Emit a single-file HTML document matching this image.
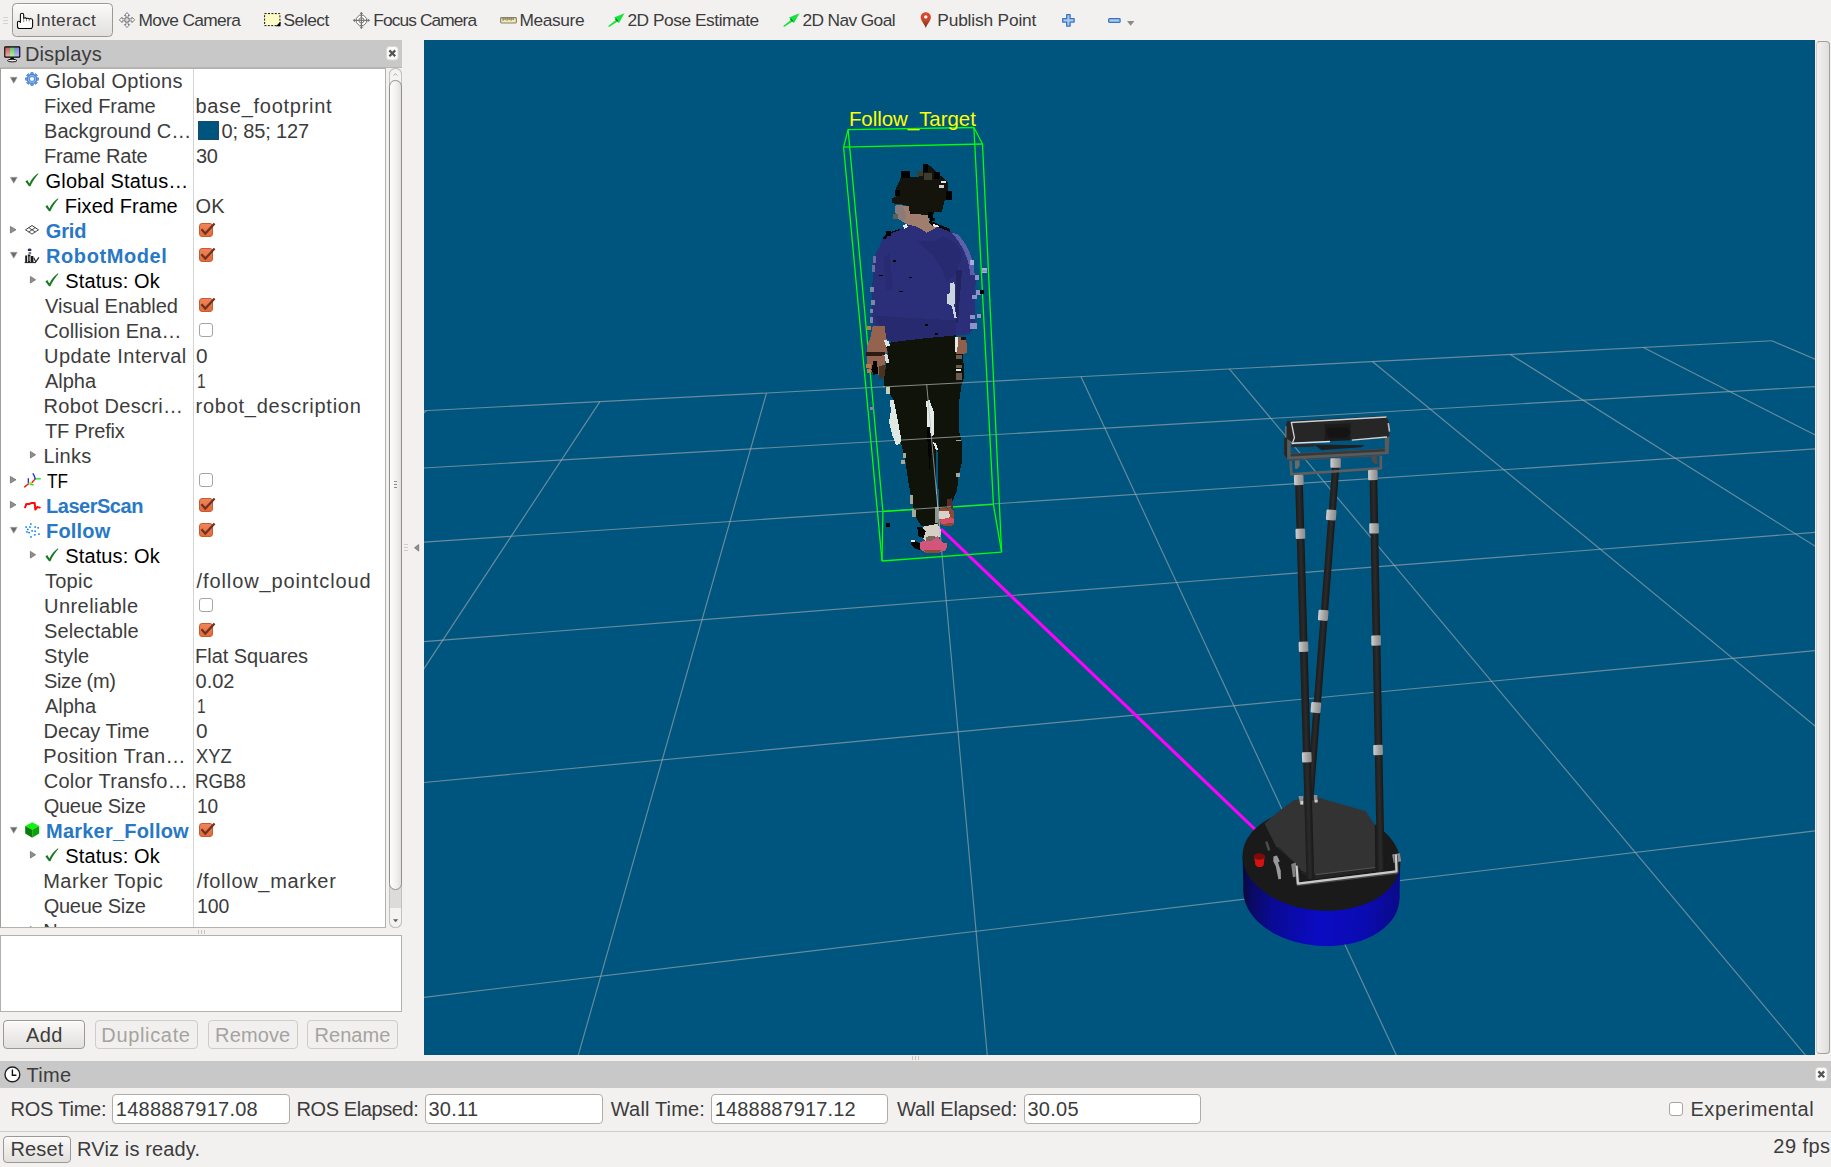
<!DOCTYPE html><html><head><meta charset="utf-8"><title>RViz</title><style>
html,body{margin:0;padding:0}
body{width:1831px;height:1167px;position:relative;overflow:hidden;background:#f2f1f0;
font-family:"Liberation Sans",sans-serif;font-size:20px;color:#3c3c3c}
.t{position:absolute;line-height:1;white-space:pre}
.a{position:absolute}
#tree{position:absolute;left:0;top:68px;width:386px;height:859.5px;box-sizing:border-box;background:#fff;
border:1px solid #b4b0ab;border-left:1px solid #a29e9a;overflow:hidden}
#tree .in{position:absolute;left:-1px;top:-1px;width:387px;height:900px}
.bar{position:absolute;background:#c8c8c8}
.btn{position:absolute;box-sizing:border-box;border:1px solid #b5b1ac;border-radius:4px;
background:linear-gradient(#f8f7f6,#e9e7e5)}
.btn.on{border-color:#9c9893;background:linear-gradient(#fbfaf9,#e2e0dd);box-shadow:0 1px 0 #fff inset}
.fld{position:absolute;box-sizing:border-box;border:1px solid #b0aca7;border-radius:4px;background:#fff}
.cb{position:absolute;width:14px;height:14px;box-sizing:border-box;border-radius:3px}
.cb.off{border:1px solid #aaa49e;background:#fff}
.cb.on{border:1px solid #c95a2e;background:linear-gradient(#f0845a,#e46a3c)}
svg{position:absolute;overflow:visible}
</style></head><body><div class="a" style="left:3px;top:17px;width:5px;height:1px;background:#d4d1ce;box-shadow:0 3px 0 #d4d1ce,0 6px 0 #d4d1ce"></div><div class="btn on" style="left:12.2px;top:3px;width:100.8px;height:33.8px;border-radius:4.5px"></div><svg class="a" style="left:17px;top:13px" width="17" height="17" viewBox="0 0 17 17" ><path d="M3.4 9.4V1.9a1.65 1.65 0 0 1 3.3 0V5.4c.9-.9 2.3-.7 2.8.3.8-.8 2.2-.6 2.7.4.9-.8 3.4-.5 3.4 1.2V13c0 1.5-1.2 2.5-1.2 2.5H2.6C1.5 15.5.5 14.3.5 13.2V9.3c0-1.200 1.600-1.700 2.900.100Z" fill="#fff" stroke="#0a0a0a" stroke-width="1.1" stroke-linejoin="round"/><path d="M6.7 5.4V9.200M9.500 5.900V8.200M12.200 6.300V8.300" stroke="#666" stroke-width="0.7" fill="none"/></svg><svg class="a" style="left:119px;top:12px" width="16" height="16" viewBox="0 0 16 16" ><g fill="#fff" stroke="#6e6e6e" stroke-width="0.9" stroke-linejoin="round"><path d="M8 0.6 10.6 3.6H9V6.9H13V5.2L15.6 7.9 13 10.6V8.9H9V12.6H10.6L8 15.5 5.4 12.6H7V8.9H3V10.6L0.4 7.9 3 5.2V6.9H7V3.6H5.4Z"/><circle cx="8" cy="7.9" r="2.3" fill="#ddd"/></g></svg><svg class="a" style="left:264px;top:13px" width="17" height="14" viewBox="0 0 17 14" ><rect x="0.6" y="0.6" width="15.3" height="12" fill="#fffcc4" stroke="#111" stroke-width="1" stroke-dasharray="2 1.4"/><path d="M16.5 8.6V13.2H11.9Z" fill="#000"/></svg><svg class="a" style="left:353px;top:12px" width="17" height="17" viewBox="0 0 17 17" ><g fill="none" stroke="#777" stroke-width="1"><circle cx="8.4" cy="8.4" r="5.3" fill="#fff"/><circle cx="8.4" cy="8.4" r="2.6"/><path d="M8.4 0.3V16.5M0.3 8.4H16.5" stroke-width="1.3"/><path d="M6.9 2.2 8.4 0.3 9.9 2.2M6.9 14.6 8.4 16.5 9.9 14.6M2.2 6.9 0.3 8.4 2.2 9.9M14.6 6.9 16.5 8.4 14.6 9.9" stroke-width="0.9"/></g></svg><svg class="a" style="left:499.5px;top:16.6px" width="17" height="7" viewBox="0 0 17 7" ><rect x="0.6" y="0.6" width="15.8" height="5.4" rx="0.9" fill="#f1e9b2" stroke="#85816f" stroke-width="1.1"/><path d="M3.1 1.1V3.6M5.1 1.1V3M7.1 1.1V3.6M9.1 1.1V3M11.1 1.1V3.6M13.1 1.1V3" stroke="#4a4738" stroke-width="0.9" fill="none"/></svg><svg class="a" style="left:607.8px;top:12.6px" width="17" height="14" viewBox="0 0 17 14" ><path d="M0.2 12.9 7.8 6.9 9.2 8.7 1.1 14Z" fill="#12e63a"/><path d="M16.5 0.3 6 4.5 10.9 10.3Z" fill="#12e63a"/><path d="M6.9 6 8.3 5.4 10.3 8 9.2 9Z" fill="#1f6e38"/></svg><svg class="a" style="left:782.8px;top:12.6px" width="17" height="14" viewBox="0 0 17 14" ><path d="M0.2 12.9 7.8 6.9 9.2 8.7 1.1 14Z" fill="#12e63a"/><path d="M16.5 0.3 6 4.5 10.9 10.3Z" fill="#12e63a"/><path d="M6.9 6 8.3 5.4 10.3 8 9.2 9Z" fill="#1f6e38"/></svg><svg class="a" style="left:920.1px;top:11.6px" width="12" height="17" viewBox="0 0 12 17" ><defs><linearGradient id="pg" x1="0" y1="0" x2="0" y2="1"><stop offset="0" stop-color="#e4492c"/><stop offset="0.5" stop-color="#c9472a"/><stop offset="1" stop-color="#5a3418"/></linearGradient></defs><path d="M5.8 0.3C2.9 0.3 0.7 2.5 0.7 5.3 0.7 8.6 4 11.5 5.8 16 7.6 11.5 10.9 8.6 10.9 5.3 10.9 2.5 8.7 0.3 5.8 0.3Z" fill="url(#pg)"/><circle cx="5.8" cy="4.9" r="1.7" fill="#fff"/></svg><svg class="a" style="left:1061.6px;top:13.6px" width="13" height="13" viewBox="0 0 13 13" ><path d="M4.7 0.7H8.1V4.7H12.1V8.1H8.1V12.1H4.7V8.1H0.7V4.7H4.7Z" fill="#a9c8f0" stroke="#3b73c1" stroke-width="1.3" stroke-linejoin="round"/></svg><svg class="a" style="left:1107.8px;top:17.6px" width="13" height="5" viewBox="0 0 13 5" ><rect x="0.7" y="0.7" width="11.4" height="3.6" rx="0.8" fill="#a9c8f0" stroke="#3b73c1" stroke-width="1.3"/></svg><svg class="a" style="left:1126.8px;top:21px" width="8" height="5" viewBox="0 0 8 5" ><path d="M0 0H7.4L3.7 4.8Z" fill="#8a8a8a"/></svg><div class="bar" style="left:0;top:40.2px;width:402px;height:27.3px;border-bottom:0.5px solid #b8b5b2"></div><div class="bar" style="left:0;top:1061px;width:1831px;height:26.8px"></div><svg class="a" style="left:3.8px;top:45.8px" width="17" height="17" viewBox="0 0 17 17" ><defs><linearGradient id="mr" x1="0" y1="0" x2="0" y2="1"><stop offset="0" stop-color="#c06060"/><stop offset="1" stop-color="#f4a8a8"/></linearGradient><linearGradient id="mg" x1="0" y1="0" x2="0" y2="1"><stop offset="0" stop-color="#68c468"/><stop offset="1" stop-color="#b0f0b0"/></linearGradient><linearGradient id="mb" x1="0" y1="0" x2="0" y2="1"><stop offset="0" stop-color="#8080d8"/><stop offset="1" stop-color="#b8b8ff"/></linearGradient></defs><rect x="0.2" y="0.3" width="16.1" height="11.4" rx="1.3" fill="#000"/><rect x="1.3" y="1.5" width="4.7" height="9" fill="url(#mr)"/><rect x="6" y="1.5" width="4.9" height="9" fill="url(#mg)"/><rect x="10.9" y="1.5" width="4.3" height="9" fill="url(#mb)"/><path d="M7 11.5H9.4L10.4 13.3H6Z" fill="#000"/><ellipse cx="8.2" cy="14.6" rx="4.7" ry="1.3" fill="#eee" stroke="#000" stroke-width="0.9"/></svg><svg class="a" style="left:385.8px;top:46px" width="13" height="15" viewBox="0 0 13 15" ><rect x="0.5" y="0.5" width="11.6" height="13.6" rx="3" fill="#fbfbfa" stroke="#d8d4d0" stroke-width="0.8"/><path d="M3.4 4.4 9.2 10.2M9.2 4.4 3.4 10.2" stroke="#555" stroke-width="2.3"/></svg><svg class="a" style="left:1814.8px;top:1067.4px" width="13" height="15" viewBox="0 0 13 15" ><rect x="0.5" y="0.5" width="11.6" height="13.6" rx="3" fill="#fbfbfa" stroke="#d8d4d0" stroke-width="0.8"/><path d="M3.4 4.4 9.2 10.2M9.2 4.4 3.4 10.2" stroke="#555" stroke-width="2.3"/></svg><svg class="a" style="left:3.6px;top:1066.4px" width="17" height="17" viewBox="0 0 17 17" ><circle cx="8.4" cy="8.4" r="7.4" fill="#fff" stroke="#222" stroke-width="1.4"/><path d="M8.4 3.6V9.2H12.4" fill="none" stroke="#111" stroke-width="1.4"/></svg><div class="a" style="left:389.3px;top:67.5px;width:12.6px;height:860px;box-sizing:border-box;border:1px solid #c4c0bb;border-radius:6.3px;background:#dddbd8"></div><div class="a" style="left:389.3px;top:67.5px;width:12.6px;height:19px;box-sizing:border-box;border:1px solid #c4c0bb;border-bottom:none;border-radius:6.3px 6.3px 0 0;background:#f4f3f2"></div><div class="a" style="left:389.3px;top:908px;width:12.6px;height:19.5px;box-sizing:border-box;border:1px solid #c4c0bb;border-top:none;border-radius:0 0 6.3px 6.3px;background:#f4f3f2"></div><div class="a" style="left:389.3px;top:80px;width:12.6px;height:810px;box-sizing:border-box;border:1px solid #948f8a;border-radius:6.3px;background:linear-gradient(90deg,#fdfdfd,#f2f1f0 55%,#e2e0de)"></div><svg class="a" style="left:393.2px;top:72.6px" width="5" height="3" viewBox="0 0 5 3" ><path d="M0.4 2.6 2.4 0.6 4.4 2.6" fill="none" stroke="#aaa6a2" stroke-width="0.9"/></svg><svg class="a" style="left:393px;top:918.6px" width="6" height="4" viewBox="0 0 6 4" ><path d="M0 0.3H5.2L2.6 3.3Z" fill="#5c5c5c"/></svg><div class="a" style="left:394px;top:481px;width:3px;height:1px;background:#8e8a86;box-shadow:0 3px 0 #8e8a86,0 6px 0 #8e8a86"></div><div class="a" style="left:403.5px;top:544px;width:4px;height:1px;background:#d0ccc8;box-shadow:0 3px 0 #d0ccc8,0 6px 0 #d0ccc8"></div><svg class="a" style="left:414px;top:543.6px" width="6" height="8" viewBox="0 0 6 8" ><path d="M4.7 0.5V7.1L0.5 3.8Z" fill="#8f8f8f" stroke="#6a6a6a" stroke-width="0.7"/></svg><svg class="a" style="left:1820.6px;top:543.6px" width="6" height="8" viewBox="0 0 6 8" ><path d="M4.7 0.5V7.1L0.5 3.8Z" fill="#8f8f8f" stroke="#6a6a6a" stroke-width="0.7"/></svg><div class="a" style="left:198px;top:929.5px;width:1px;height:4px;background:#c8c4c0;box-shadow:3px 0 0 #c8c4c0,6px 0 0 #c8c4c0"></div><div class="a" style="left:912px;top:1056px;width:1px;height:4px;background:#c8c4c0;box-shadow:3px 0 0 #c8c4c0,6px 0 0 #c8c4c0"></div><div class="a" style="left:1816.2px;top:41px;width:13.6px;height:1012.5px;box-sizing:border-box;border:1px solid #a39f9a;border-left-color:#d2cfcc;border-radius:4px;background:linear-gradient(90deg,#f3f2f1,#e0dedb)"></div><div class="a" style="left:0;top:934.5px;width:401.8px;height:77px;box-sizing:border-box;border:1px solid #b4b0ab;background:#fff"></div><div class="btn on" style="left:3.3px;top:1019.6px;width:82.2px;height:29.8px"></div><div class="btn" style="left:94.6px;top:1019.6px;width:103.6px;height:29.8px;border-color:#cfccc8;background:#f1f0ee"></div><div class="btn" style="left:207.5px;top:1019.6px;width:90.7px;height:29.8px;border-color:#cfccc8;background:#f1f0ee"></div><div class="btn" style="left:307.3px;top:1019.6px;width:91px;height:29.8px;border-color:#cfccc8;background:#f1f0ee"></div><div class="fld" style="left:112.3px;top:1094.3px;width:177.3px;height:30.2px"></div><div class="fld" style="left:425.3px;top:1094.3px;width:177.5px;height:30.2px"></div><div class="fld" style="left:711.4px;top:1094.3px;width:177.1px;height:30.2px"></div><div class="fld" style="left:1024.3px;top:1094.3px;width:177.1px;height:30.2px"></div><div class="cb off" style="left:1669px;top:1102px"></div><div class="a" style="left:0;top:1131.2px;width:1831px;height:1px;background:#d0cdca"></div><div class="btn on" style="left:3.3px;top:1135.8px;width:67.4px;height:27.6px"></div><div id="tree"><div class="in"><div class="a" style="left:193px;top:0;width:1px;height:900px;background:#d4d4d4"></div><svg class="a" style="left:9.8px;top:8.9px" width="8" height="7" viewBox="0 0 8 7" ><path d="M0.3 0.3H7.2L3.75 6.3Z" fill="#6a6a6a" stroke="#a4a4a4" stroke-width="0.6"/></svg><svg class="a" style="left:9.8px;top:108.9px" width="8" height="7" viewBox="0 0 8 7" ><path d="M0.3 0.3H7.2L3.75 6.3Z" fill="#6a6a6a" stroke="#a4a4a4" stroke-width="0.6"/></svg><svg class="a" style="left:9.8px;top:183.9px" width="8" height="7" viewBox="0 0 8 7" ><path d="M0.3 0.3H7.2L3.75 6.3Z" fill="#6a6a6a" stroke="#a4a4a4" stroke-width="0.6"/></svg><svg class="a" style="left:9.8px;top:458.9px" width="8" height="7" viewBox="0 0 8 7" ><path d="M0.3 0.3H7.2L3.75 6.3Z" fill="#6a6a6a" stroke="#a4a4a4" stroke-width="0.6"/></svg><svg class="a" style="left:9.8px;top:758.9px" width="8" height="7" viewBox="0 0 8 7" ><path d="M0.3 0.3H7.2L3.75 6.3Z" fill="#6a6a6a" stroke="#a4a4a4" stroke-width="0.6"/></svg><svg class="a" style="left:10px;top:158.4px" width="7" height="8" viewBox="0 0 7 8" ><path d="M0.4 0.4 6 3.75 0.4 7.1Z" fill="#8f8f8f" stroke="#666" stroke-width="0.7"/></svg><svg class="a" style="left:10px;top:408.4px" width="7" height="8" viewBox="0 0 7 8" ><path d="M0.4 0.4 6 3.75 0.4 7.1Z" fill="#8f8f8f" stroke="#666" stroke-width="0.7"/></svg><svg class="a" style="left:10px;top:433.4px" width="7" height="8" viewBox="0 0 7 8" ><path d="M0.4 0.4 6 3.75 0.4 7.1Z" fill="#8f8f8f" stroke="#666" stroke-width="0.7"/></svg><svg class="a" style="left:30.3px;top:208.4px" width="7" height="8" viewBox="0 0 7 8" ><path d="M0.4 0.4 5.6 3.75 0.4 7.1Z" fill="#8f8f8f" stroke="#666" stroke-width="0.7"/></svg><svg class="a" style="left:30.3px;top:383.4px" width="7" height="8" viewBox="0 0 7 8" ><path d="M0.4 0.4 5.6 3.75 0.4 7.1Z" fill="#8f8f8f" stroke="#666" stroke-width="0.7"/></svg><svg class="a" style="left:30.3px;top:483.4px" width="7" height="8" viewBox="0 0 7 8" ><path d="M0.4 0.4 5.6 3.75 0.4 7.1Z" fill="#8f8f8f" stroke="#666" stroke-width="0.7"/></svg><svg class="a" style="left:30.3px;top:783.4px" width="7" height="8" viewBox="0 0 7 8" ><path d="M0.4 0.4 5.6 3.75 0.4 7.1Z" fill="#8f8f8f" stroke="#666" stroke-width="0.7"/></svg><svg class="a" style="left:30.3px;top:858.4px" width="7" height="8" viewBox="0 0 7 8" ><path d="M0.4 0.4 5.6 3.75 0.4 7.1Z" fill="#8f8f8f" stroke="#666" stroke-width="0.7"/></svg><svg class="a" style="left:25px;top:105px" width="14" height="14" viewBox="0 0 14 14" ><path d="M0.4 8.4 2.3 7 4.4 10.4C6.6 6 9.6 2.4 13 0.2L13.4 0.9C10.6 3.8 7.4 8.4 5.4 13.2H4Z" fill="#1a7a1f"/></svg><svg class="a" style="left:45px;top:130px" width="14" height="14" viewBox="0 0 14 14" ><path d="M0.4 8.4 2.3 7 4.4 10.4C6.6 6 9.6 2.4 13 0.2L13.4 0.9C10.6 3.8 7.4 8.4 5.4 13.2H4Z" fill="#1a7a1f"/></svg><svg class="a" style="left:45px;top:205px" width="14" height="14" viewBox="0 0 14 14" ><path d="M0.4 8.4 2.3 7 4.4 10.4C6.6 6 9.6 2.4 13 0.2L13.4 0.9C10.6 3.8 7.4 8.4 5.4 13.2H4Z" fill="#1a7a1f"/></svg><svg class="a" style="left:45px;top:480px" width="14" height="14" viewBox="0 0 14 14" ><path d="M0.4 8.4 2.3 7 4.4 10.4C6.6 6 9.6 2.4 13 0.2L13.4 0.9C10.6 3.8 7.4 8.4 5.4 13.2H4Z" fill="#1a7a1f"/></svg><svg class="a" style="left:45px;top:780px" width="14" height="14" viewBox="0 0 14 14" ><path d="M0.4 8.4 2.3 7 4.4 10.4C6.6 6 9.6 2.4 13 0.2L13.4 0.9C10.6 3.8 7.4 8.4 5.4 13.2H4Z" fill="#1a7a1f"/></svg><div class="cb on" style="left:199px;top:155px"></div><svg class="a" style="left:199px;top:154px" width="17" height="16" viewBox="0 0 17 16" ><path d="M2.4 7.3 6.3 11.6 15.6 1.6" fill="none" stroke="#6b3320" stroke-width="2.2" stroke-linejoin="miter"/></svg><div class="cb on" style="left:199px;top:180px"></div><svg class="a" style="left:199px;top:179px" width="17" height="16" viewBox="0 0 17 16" ><path d="M2.4 7.3 6.3 11.6 15.6 1.6" fill="none" stroke="#6b3320" stroke-width="2.2" stroke-linejoin="miter"/></svg><div class="cb on" style="left:199px;top:230px"></div><svg class="a" style="left:199px;top:229px" width="17" height="16" viewBox="0 0 17 16" ><path d="M2.4 7.3 6.3 11.6 15.6 1.6" fill="none" stroke="#6b3320" stroke-width="2.2" stroke-linejoin="miter"/></svg><div class="cb on" style="left:199px;top:430px"></div><svg class="a" style="left:199px;top:429px" width="17" height="16" viewBox="0 0 17 16" ><path d="M2.4 7.3 6.3 11.6 15.6 1.6" fill="none" stroke="#6b3320" stroke-width="2.2" stroke-linejoin="miter"/></svg><div class="cb on" style="left:199px;top:455px"></div><svg class="a" style="left:199px;top:454px" width="17" height="16" viewBox="0 0 17 16" ><path d="M2.4 7.3 6.3 11.6 15.6 1.6" fill="none" stroke="#6b3320" stroke-width="2.2" stroke-linejoin="miter"/></svg><div class="cb on" style="left:199px;top:555px"></div><svg class="a" style="left:199px;top:554px" width="17" height="16" viewBox="0 0 17 16" ><path d="M2.4 7.3 6.3 11.6 15.6 1.6" fill="none" stroke="#6b3320" stroke-width="2.2" stroke-linejoin="miter"/></svg><div class="cb on" style="left:199px;top:755px"></div><svg class="a" style="left:199px;top:754px" width="17" height="16" viewBox="0 0 17 16" ><path d="M2.4 7.3 6.3 11.6 15.6 1.6" fill="none" stroke="#6b3320" stroke-width="2.2" stroke-linejoin="miter"/></svg><div class="cb off" style="left:199px;top:255px"></div><div class="cb off" style="left:199px;top:405px"></div><div class="cb off" style="left:199px;top:530px"></div><svg class="a" style="left:24.6px;top:4.4px" width="14" height="14" viewBox="0 0 14 14" ><g transform="translate(7,7)"><g fill="#6f9ee0" stroke="#3b78cc" stroke-width="0.7"><rect x="-1.3" y="-6.5" width="2.6" height="2.6" rx="0.4" transform="rotate(0)"/><rect x="-1.3" y="-6.5" width="2.6" height="2.6" rx="0.4" transform="rotate(45)"/><rect x="-1.3" y="-6.5" width="2.6" height="2.6" rx="0.4" transform="rotate(90)"/><rect x="-1.3" y="-6.5" width="2.6" height="2.6" rx="0.4" transform="rotate(135)"/><rect x="-1.3" y="-6.5" width="2.6" height="2.6" rx="0.4" transform="rotate(180)"/><rect x="-1.3" y="-6.5" width="2.6" height="2.6" rx="0.4" transform="rotate(225)"/><rect x="-1.3" y="-6.5" width="2.6" height="2.6" rx="0.4" transform="rotate(270)"/><rect x="-1.3" y="-6.5" width="2.6" height="2.6" rx="0.4" transform="rotate(315)"/></g><circle r="3.55" fill="none" stroke="#3b78cc" stroke-width="2.9"/><circle r="3.55" fill="none" stroke="#8db3ea" stroke-width="1.5"/><circle r="1.6" fill="#eef4fc"/></g></svg><div class="a" style="left:198.8px;top:53.9px;width:19px;height:17.6px;background:rgb(0,85,127);outline:0.5px solid #1a4a66"></div><svg class="a" style="left:25.2px;top:156.6px" width="14" height="10" viewBox="0 0 14 10" ><g fill="none" stroke="#333" stroke-width="0.9"><path d="M7 0.5 13.5 4.8 7 9.1 0.5 4.8Z"/><path d="M3.75 2.65 10.25 6.95M10.25 2.65 3.75 6.95"/></g></svg><svg class="a" style="left:24.4px;top:179.6px" width="16" height="16" viewBox="0 0 16 16" ><ellipse cx="5.6" cy="1.6" rx="1.9" ry="1.1" fill="#24389a"/><path d="M3.9 2.4H7.3" stroke="#111" stroke-width="0.9"/><path d="M4.6 4.4H7.2V5.6H4.6Z" fill="#222"/><path d="M1.2 7.4H3V14.6H1.2ZM3.8 6.6H6.4V14.6H3.8ZM7 8H9.4V14.6H7Z" fill="#1b1b1b"/><path d="M4.6 8.2H5.7V13H4.6Z" fill="#9aa"/><path d="M9.8 9.8 11.8 13.9 14.9 9.4" fill="none" stroke="#222" stroke-width="1.1"/><path d="M0.6 14.6H12" stroke="#222" stroke-width="1"/></svg><svg class="a" style="left:23.5px;top:404.5px" width="17" height="15" viewBox="0 0 17 15" ><g fill="none" stroke-width="1.4" stroke-linecap="round"><path d="M0.7 13.9 L4.8 10.5" stroke="#ff1010"/><path d="M4.8 10.5 L9.1 11.9" stroke="#10e010"/><path d="M4.3 5.7 L4.4 10.1" stroke="#2030ff"/><path d="M8.0 9.5 L11.2 5.9" stroke="#ff1010"/><path d="M11.2 5.9 L16.3 5.9" stroke="#10e010"/><path d="M9.1 0.8 L10.1 2.5 L11.1 5.5" stroke="#2030ff"/><path d="M5.1 10.3 L7.1 9.1" stroke="#f0e020"/></g></svg><svg class="a" style="left:23.5px;top:432px" width="17" height="12" viewBox="0 0 17 12" ><path d="M1.1 7.3 L2.4 3.9 L5.6 3.9 L7.5 2.9 L10.7 2.9 L11.3 9.6 L13.4 7.0 L15.8 7.6" fill="none" stroke="#ff0a0a" stroke-width="2" stroke-linejoin="round" stroke-linecap="round"/></svg><svg class="a" style="left:24px;top:454px" width="17" height="17" viewBox="0 0 17 17" ><g fill="#0a84ff"><rect x="6.0" y="1.3" width="1.7" height="1.5"/><rect x="1.3" y="4.3" width="1.7" height="1.5"/><rect x="5.1" y="4.3" width="1.7" height="1.5"/><rect x="10.3" y="4.3" width="1.7" height="1.5"/><rect x="13.3" y="5.1" width="1.7" height="1.5"/><rect x="3.0" y="6.7" width="1.7" height="1.5"/><rect x="7.3" y="8.2" width="1.7" height="1.5"/><rect x="10.3" y="8.5" width="1.7" height="1.5"/><rect x="2.1" y="9.2" width="1.7" height="1.5"/><rect x="4.3" y="9.9" width="1.7" height="1.5"/><rect x="14.1" y="11.4" width="1.7" height="1.5"/><rect x="9.9" y="12.1" width="1.7" height="1.5"/><rect x="6.2" y="14.2" width="1.7" height="1.5"/></g></svg><svg class="a" style="left:24.8px;top:754px" width="15" height="16" viewBox="0 0 15 16" ><path d="M7.2 0.2 14.2 3.9 7.2 7.8 0.2 3.9Z" fill="#0cf50c"/><path d="M0.2 3.9 7.2 7.8V15.8L0.2 11.6Z" fill="#0a7d0a"/><path d="M14.2 3.9 7.2 7.8V15.8L14.2 11.6Z" fill="#0aa40a"/></svg><span class="t" id="t10" style="left:45.60px;top:2.77px;letter-spacing:0.354px;">Global Options</span><span class="t" id="t11" style="left:44.00px;top:27.77px;letter-spacing:-0.050px;">Fixed Frame</span><span class="t" id="t12" style="left:195.40px;top:27.77px;letter-spacing:0.731px;">base_footprint</span><span class="t" id="t13" style="left:44.00px;top:52.77px;letter-spacing:0.042px;">Background C…</span><span class="t" id="t14" style="left:221.50px;top:52.77px;letter-spacing:-0.144px;">0; 85; 127</span><span class="t" id="t15" style="left:44.00px;top:77.77px;letter-spacing:-0.211px;">Frame Rate</span><span class="t" id="t16" style="left:196.00px;top:77.77px;letter-spacing:-0.300px;">30</span><span class="t" id="t17" style="left:45.60px;top:102.77px;color:#000;letter-spacing:0.208px;">Global Status…</span><span class="t" id="t18" style="left:64.80px;top:127.77px;color:#000;letter-spacing:0.070px;">Fixed Frame</span><span class="t" id="t19" style="left:195.60px;top:127.77px;">OK</span><span class="t" id="t20" style="left:45.80px;top:152.77px;font-weight:bold;color:rgb(40,120,197);letter-spacing:-0.167px;">Grid</span><span class="t" id="t21" style="left:46.00px;top:177.77px;font-weight:bold;color:rgb(40,120,197);letter-spacing:0.589px;">RobotModel</span><span class="t" id="t22" style="left:65.30px;top:202.77px;color:#000;letter-spacing:0.122px;">Status: Ok</span><span class="t" id="t23" style="left:45.00px;top:227.77px;letter-spacing:-0.008px;">Visual Enabled</span><span class="t" id="t24" style="left:44.00px;top:252.77px;letter-spacing:0.054px;">Collision Ena…</span><span class="t" id="t25" style="left:44.00px;top:277.77px;letter-spacing:0.471px;">Update Interval</span><span class="t" id="t26" style="left:195.56px;top:277.77px;transform-origin:0 0;transform:scaleX(1.0400);">0</span><span class="t" id="t27" style="left:45.00px;top:302.77px;letter-spacing:-0.025px;">Alpha</span><span class="t" id="t28" style="left:197.22px;top:302.77px;transform-origin:0 0;transform:scaleX(0.7778);">1</span><span class="t" id="t29" style="left:43.50px;top:327.77px;letter-spacing:0.333px;">Robot Descri…</span><span class="t" id="t30" style="left:195.60px;top:327.77px;letter-spacing:0.737px;">robot_description</span><span class="t" id="t31" style="left:45.00px;top:352.77px;letter-spacing:-0.162px;">TF Prefix</span><span class="t" id="t32" style="left:43.50px;top:377.77px;letter-spacing:0.250px;">Links</span><span class="t" id="t33" style="left:46.80px;top:402.77px;transform-origin:0 0;transform:scaleX(0.8583);color:#000;">TF</span><span class="t" id="t34" style="left:46.00px;top:427.77px;font-weight:bold;color:rgb(40,120,197);letter-spacing:-0.475px;">LaserScan</span><span class="t" id="t35" style="left:46.00px;top:452.77px;font-weight:bold;color:rgb(40,120,197);letter-spacing:0.200px;">Follow</span><span class="t" id="t36" style="left:65.30px;top:477.77px;color:#000;letter-spacing:0.122px;">Status: Ok</span><span class="t" id="t37" style="left:45.00px;top:502.77px;letter-spacing:0.250px;">Topic</span><span class="t" id="t38" style="left:196.60px;top:502.77px;letter-spacing:0.888px;">/follow_pointcloud</span><span class="t" id="t39" style="left:44.00px;top:527.77px;letter-spacing:0.444px;">Unreliable</span><span class="t" id="t40" style="left:44.00px;top:552.77px;letter-spacing:0.144px;">Selectable</span><span class="t" id="t41" style="left:44.00px;top:577.77px;letter-spacing:0.175px;">Style</span><span class="t" id="t42" style="left:195.10px;top:577.77px;letter-spacing:-0.036px;">Flat Squares</span><span class="t" id="t43" style="left:44.00px;top:602.77px;letter-spacing:-0.371px;">Size (m)</span><span class="t" id="t44" style="left:195.60px;top:602.77px;letter-spacing:-0.067px;">0.02</span><span class="t" id="t45" style="left:45.00px;top:627.77px;letter-spacing:-0.025px;">Alpha</span><span class="t" id="t46" style="left:197.22px;top:627.77px;transform-origin:0 0;transform:scaleX(0.7778);">1</span><span class="t" id="t47" style="left:43.50px;top:652.77px;letter-spacing:0.033px;">Decay Time</span><span class="t" id="t48" style="left:195.56px;top:652.77px;transform-origin:0 0;transform:scaleX(1.0400);">0</span><span class="t" id="t49" style="left:43.20px;top:677.77px;letter-spacing:0.431px;">Position Tran…</span><span class="t" id="t50" style="left:195.88px;top:677.77px;transform-origin:0 0;transform:scaleX(0.9158);">XYZ</span><span class="t" id="t51" style="left:43.70px;top:702.77px;letter-spacing:0.300px;">Color Transfo…</span><span class="t" id="t52" style="left:195.40px;top:702.77px;transform-origin:0 0;transform:scaleX(0.9327);">RGB8</span><span class="t" id="t53" style="left:43.70px;top:727.77px;letter-spacing:-0.267px;">Queue Size</span><span class="t" id="t54" style="left:196.95px;top:727.77px;transform-origin:0 0;transform:scaleX(0.9524);">10</span><span class="t" id="t55" style="left:46.10px;top:752.77px;font-weight:bold;color:rgb(40,120,197);letter-spacing:0.208px;">Marker_Follow</span><span class="t" id="t56" style="left:65.30px;top:777.77px;color:#000;letter-spacing:0.122px;">Status: Ok</span><span class="t" id="t57" style="left:43.20px;top:802.77px;letter-spacing:0.500px;">Marker Topic</span><span class="t" id="t58" style="left:196.80px;top:802.77px;letter-spacing:0.692px;">/follow_marker</span><span class="t" id="t59" style="left:43.70px;top:827.77px;letter-spacing:-0.267px;">Queue Size</span><span class="t" id="t60" style="left:196.93px;top:827.77px;transform-origin:0 0;transform:scaleX(0.9688);">100</span><span class="t" id="t61" style="left:43.20px;top:852.77px;letter-spacing:-0.744px;">Namespaces</span></div></div><div class="a" id="vp" style="left:424px;top:40px;width:1391px;height:1015px;background:rgb(0,85,127);overflow:hidden"><svg style="left:0;top:0" width="1391" height="1015" viewBox="424 40 1391 1015"><g stroke="#a9acb0" stroke-opacity="0.62" stroke-width="1.15" fill="none"><line x1="245.8" y1="420.0" x2="-2451.2" y2="2336.2"/><line x1="426.4" y1="410.6" x2="-1323.0" y2="2104.0"/><line x1="599.9" y1="401.6" x2="-395.8" y2="1913.2"/><line x1="766.5" y1="393.0" x2="379.8" y2="1753.5"/><line x1="926.7" y1="384.6" x2="1038.1" y2="1618.0"/><line x1="1080.9" y1="376.6" x2="1603.8" y2="1501.6"/><line x1="1229.3" y1="368.9" x2="2095.3" y2="1400.4"/><line x1="1372.4" y1="361.5" x2="2526.1" y2="1311.7"/><line x1="1510.3" y1="354.4" x2="2907.0" y2="1233.3"/><line x1="1643.4" y1="347.5" x2="3246.1" y2="1163.5"/><line x1="1771.9" y1="340.8" x2="3549.9" y2="1101.0"/><line x1="245.8" y1="420.0" x2="1771.9" y2="340.8"/><line x1="156.1" y1="483.7" x2="1871.4" y2="383.3"/><line x1="37.5" y1="568.0" x2="1996.1" y2="436.7"/><line x1="-127.1" y1="684.9" x2="2157.1" y2="505.5"/><line x1="-370.5" y1="857.8" x2="2372.9" y2="597.7"/><line x1="-767.2" y1="1139.8" x2="2677.1" y2="727.8"/><line x1="-1529.2" y1="1681.1" x2="3138.2" y2="925.0"/></g><line x1="941" y1="529" x2="1262" y2="836" stroke="#ff00ff" stroke-width="3.1"/><defs><linearGradient id="blu" gradientUnits="userSpaceOnUse" x1="1242" y1="0" x2="1402" y2="0"><stop offset="0" stop-color="#090938"/><stop offset="0.06" stop-color="#0a0a62"/><stop offset="0.2" stop-color="#0a0a94"/><stop offset="0.5" stop-color="#0b0bc4"/><stop offset="0.78" stop-color="#0b0bb2"/><stop offset="1" stop-color="#0a0a86"/></linearGradient><linearGradient id="pol" x1="0" y1="0" x2="1" y2="0"><stop offset="0" stop-color="#1c1c1c"/><stop offset="0.5" stop-color="#2b2b2b"/><stop offset="1" stop-color="#171717"/></linearGradient><linearGradient id="jnt" x1="0" y1="0" x2="1" y2="0"><stop offset="0" stop-color="#d0d0d0"/><stop offset="0.5" stop-color="#a8a8a8"/><stop offset="1" stop-color="#8a8a8a"/></linearGradient></defs><g fill="url(#blu)"><ellipse cx="1321.4" cy="894.8" rx="78.2" ry="51.1" transform="rotate(4.6 1321.4 894.8)"/><polygon points="1242.6,855.8 1400.2,863.2 1399.5,898.5 1243.4,891.1"/></g><ellipse cx="1321.4" cy="859.5" rx="79.0" ry="51.1" fill="#1a1a1a" transform="rotate(4.6 1321.4 859.5)"/><polygon points="1264.5,823.4 1281.8,808.9 1294.0,800.0 1317.4,797.2 1365.9,811.2 1374.8,825.1 1375.3,867.4 1315.8,874.9 1301.8,871.3 1295.1,863.0 1276.2,846.8" fill="#333333" /><polygon points="1315.8,874.9 1375.3,867.4 1376.2,871.1 1315.4,879.1 1301.8,873.8 1301.8,871.3" fill="#242424" /><polyline points="1315.8,874.7 1375.1,867.5" fill="none" stroke="#5a5a5a" stroke-width="0.90" /><polygon points="1276.2,846.8 1279.6,847.4 1299.0,866.9 1301.8,871.3 1295.1,863.5" fill="#262626" /><polygon points="1265.1,842.1 1267.5,841.2 1270.4,850.1 1268.0,851.0" fill="#4c4c4c" /><polygon points="1273.4,856.6 1276.9,855.5 1279.8,861.3 1278.0,862.6 1280.7,870.4 1281.0,879.1 1278.4,879.3 1275.8,866.2 1273.3,861.3" fill="#9a9a9a" /><polygon points="1254.2,856.8 1264.6,856.8 1263.7,865.2 1261.7,866.9 1257.3,866.9 1255.3,864.8" fill="#d41212" /><ellipse cx="1259.3" cy="856.5" rx="5.8" ry="3.2" fill="#7c0c0c"/><polygon points="1298.5,796.1 1303.2,796.1 1303.2,804.5 1300.2,804.5" fill="#8c8c8c" /><polygon points="1300.5,801.1 1303.2,801.1 1303.2,804.5 1300.5,804.5" fill="#d0d0d0" /><polygon points="1313.0,795.0 1317.2,795.0 1317.6,802.3 1314.6,802.5" fill="#8c8c8c" /><polygon points="1314.8,800.0 1317.6,799.8 1317.6,802.3 1314.8,802.5" fill="#c8c8c8" /><rect x="-3.60" y="0" width="7.20" height="335.0" fill="url(#pol)" transform="translate(1335.8 466.0) rotate(4.45)"/><rect x="1326.2" y="509.7" width="10.0" height="10.6" rx="1.2" fill="url(#jnt)" transform="rotate(4.5 1331.2 515.0)"/><rect x="1318.2" y="610.0" width="10.0" height="10.6" rx="1.2" fill="url(#jnt)" transform="rotate(4.5 1323.2 615.3)"/><rect x="1310.9" y="702.3" width="10.0" height="10.6" rx="1.2" fill="url(#jnt)" transform="rotate(4.5 1315.9 707.6)"/><polyline points="1290.6,460.4 1291.4,474.4 1380.8,468.4 1380.8,455.7" fill="none" stroke="#5e5e5e" stroke-width="2.60" stroke-linejoin="miter"/><polyline points="1290.1,460.4 1381.0,455.7" fill="none" stroke="#4a4a4a" stroke-width="1.20" /><polygon points="1294.9,460.4 1299.6,460.2 1299.6,466.0 1297.2,469.0 1295.0,468.6" fill="#6a6a6a" /><polygon points="1371.5,455.9 1376.3,455.5 1378.1,463.4 1374.1,463.8 1371.5,460.0" fill="#4c4c4c" /><rect x="1330.4" y="458.2" width="10.4" height="9.6" rx="1.2" fill="url(#jnt)" transform="rotate(0.0 1335.6 463.0)"/><polygon points="1284.1,437.7 1290.6,437.7 1290.6,453.6 1384.8,448.8 1384.8,436.0 1389.5,434.3 1388.7,454.0 1287.1,459.6 1284.1,454.8" fill="#5a5a5a" /><polygon points="1290.6,453.8 1384.8,449.0 1384.8,451.4 1290.6,456.6" fill="#383838" /><polygon points="1284.1,437.7 1287.1,437.7 1287.1,459.1 1284.1,454.8" fill="#262626" /><polygon points="1313.7,444.6 1364.3,445.2 1361.3,447.3 1321.4,449.9" fill="#1e1e1e" /><polygon points="1291.4,444.6 1314.6,443.7 1314.6,446.7 1291.4,447.3" fill="#2a2a2a" /><polygon points="1285.9,425.7 1287.1,421.0 1386.1,415.9 1389.5,423.1 1389.5,436.0 1386.5,437.7 1352.3,440.3 1293.1,442.8 1285.4,437.7" fill="#262626" /><polygon points="1324.8,424.4 1350.5,423.3 1350.5,440.1 1324.8,441.3" fill="#1b1b1b" /><polygon points="1327.0,428.3 1347.5,427.2 1350.5,432.1 1347.5,437.3 1330.0,438.1 1327.0,434.3" fill="#141414" /><polyline points="1290.7,422.5 1386.5,417.1" fill="none" stroke="#cfcfcf" stroke-width="1.50" /><polyline points="1291.4,422.7 1294.4,437.7 1292.7,442.4" fill="none" stroke="#d8d8d8" stroke-width="1.30" /><polyline points="1291.9,443.3 1330.0,441.5" fill="none" stroke="#e0e0e0" stroke-width="1.60" /><polyline points="1351.8,440.1 1387.0,437.0" fill="none" stroke="#d4d4d4" stroke-width="1.40" /><polyline points="1388.3,423.1 1389.5,431.7" fill="none" stroke="#bdbdbd" stroke-width="1.60" /><polyline points="1285.9,426.1 1285.9,437.7" fill="none" stroke="#8a8a8a" stroke-width="1.00" /><rect x="-3.85" y="0" width="7.70" height="396.2" fill="url(#pol)" transform="translate(1299.0 483.0) rotate(-1.65)"/><rect x="-3.85" y="0" width="7.70" height="395.1" fill="url(#pol)" transform="translate(1373.4 478.0) rotate(-1.09)"/><rect x="1294.0" y="474.9" width="9.6" height="10.2" rx="1.2" fill="url(#jnt)" transform="rotate(-1.5 1298.8 480.0)"/><rect x="1295.6" y="528.7" width="9.6" height="10.2" rx="1.2" fill="url(#jnt)" transform="rotate(-1.5 1300.4 533.8)"/><rect x="1298.7" y="641.6" width="9.6" height="10.2" rx="1.2" fill="url(#jnt)" transform="rotate(-1.5 1303.5 646.7)"/><rect x="1302.0" y="752.1" width="9.6" height="10.2" rx="1.2" fill="url(#jnt)" transform="rotate(-1.5 1306.8 757.2)"/><rect x="1368.1" y="469.9" width="9.6" height="10.2" rx="1.2" fill="url(#jnt)" transform="rotate(-1.0 1372.9 475.0)"/><rect x="1369.3" y="523.3" width="9.6" height="10.2" rx="1.2" fill="url(#jnt)" transform="rotate(-1.0 1374.1 528.4)"/><rect x="1371.3" y="635.4" width="9.6" height="10.2" rx="1.2" fill="url(#jnt)" transform="rotate(-1.0 1376.1 640.5)"/><rect x="1373.3" y="744.9" width="9.6" height="10.2" rx="1.2" fill="url(#jnt)" transform="rotate(-1.0 1378.1 750.0)"/><polygon points="1291.2,864.1 1295.7,862.4 1297.6,875.8 1292.9,877.4" fill="#808080" /><polygon points="1392.1,854.6 1399.8,853.3 1401.2,861.3 1393.7,863.0" fill="#8c8c8c" /><polyline points="1296.5,866.0 1298.0,884.2 1396.7,872.1 1396.1,855.2" fill="none" stroke="#4a4a4a" stroke-width="3.60" stroke-linejoin="round"/><polyline points="1296.5,865.7 1297.9,883.6 1396.5,871.4 1395.9,854.8" fill="none" stroke="#cacaca" stroke-width="2.20" stroke-linejoin="round"/><g stroke="#00ff00" stroke-width="1.3" fill="none"><line x1="848.1" y1="129.6" x2="973.9" y2="127.5"/><line x1="882.9" y1="511.5" x2="993.4" y2="504.4"/><line x1="848.1" y1="129.6" x2="882.9" y2="511.5"/><line x1="973.9" y1="127.5" x2="993.4" y2="504.4"/><line x1="973.9" y1="127.5" x2="982.5" y2="144.0"/><line x1="843.6" y1="147.2" x2="848.1" y2="129.6"/><line x1="993.4" y1="504.4" x2="1001.6" y2="552.1"/><line x1="882.0" y1="561.0" x2="882.9" y2="511.5"/></g><g shape-rendering="crispEdges"><polygon points="895.6,204.6 908.8,206.4 910.0,213.6 928.0,214.8 929.8,220.8 936.4,226.8 931.6,234.0 926.8,232.8 917.2,226.8 907.6,224.4 902.8,222.0 898.0,218.4 895.0,212.4" fill="#a07e6e" /><polygon points="895.6,204.6 902.8,205.2 906.4,217.2 902.8,222.0 898.0,218.4 895.0,212.4" fill="#8a7a78" /><g fill="#5b6358"><rect x="892.9" y="214.2" width="4.8" height="4.6"/></g><polygon points="882.4,238.8 886.0,234.0 892.0,231.6 900.4,229.2 907.6,224.4 917.2,226.8 926.8,232.8 934.0,229.2 938.8,226.8 949.6,230.4 955.5,234.0 962.7,241.2 967.5,249.6 971.1,260.3 974.7,274.7 975.7,277.2 975.3,294.0 974.7,309.6 975.3,324.0 969.9,333.6 965.1,335.4 956.1,335.4 922.0,338.6 891.4,342.3 886.0,337.2 884.8,326.4 872.8,325.2 871.9,306.0 872.5,282.0 872.5,269.9 873.4,257.9 876.4,251.9 880.0,246.0" fill="#2b2e78"/><polygon points="917.2,241.2 932.8,255.5 942.4,269.9 946.0,281.9 955.5,274.7 962.1,256.7 957.9,244.8 943.6,236.4 934.0,241.2" fill="#272a71" /><polygon points="889.6,253.1 893.2,290.0 886.0,290.0 883.6,257.9" fill="#282b72" /><polygon points="955.5,270.0 962.1,270.0 957.9,322.8 955.5,322.8" fill="#22245f" /><polygon points="874.0,315.6 955.5,320.4 955.5,335.4 922.0,338.6 891.4,342.3 886.0,337.2" fill="#282a70" /><polygon points="951.9,232.8 957.9,234.0 965.1,243.6 969.9,253.1 973.5,265.1 974.7,274.7 970.5,274.7 968.1,261.5 963.9,250.7 958.5,241.2" fill="#5c60aa" /><g fill="#a9add6"><rect x="969.9" y="260.3" width="4.2" height="4.2"/><rect x="981.9" y="268.1" width="4.6" height="4.6"/><rect x="974.7" y="275.3" width="4.2" height="4.6"/></g><g fill="#8f92c8"><rect x="981.9" y="270.0" width="4.6" height="2.4"/><rect x="975.3" y="275.4" width="3.6" height="4.8"/><rect x="975.9" y="290.4" width="4.6" height="4.3"/><rect x="971.7" y="294.6" width="4.8" height="4.8"/><rect x="977.1" y="313.8" width="4.1" height="4.1"/><rect x="969.9" y="315.0" width="5.4" height="3.6"/><rect x="969.9" y="323.4" width="6.6" height="6.0"/></g><g fill="#000"><rect x="980.1" y="290.1" width="3.4" height="4.1"/></g><g fill="#7d86a8"><rect x="869.8" y="286.8" width="4.1" height="4.8"/><rect x="871.0" y="300.0" width="3.6" height="4.8"/><rect x="869.8" y="309.0" width="3.6" height="4.2"/><rect x="869.8" y="317.4" width="3.4" height="6.0"/><rect x="869.8" y="406.7" width="4.1" height="3.2"/></g><g fill="#6a70a6"><rect x="872.8" y="255.5" width="3.6" height="7.2"/><rect x="872.2" y="265.1" width="2.4" height="7.2"/></g><polygon points="902.8,225.0 907.0,223.8 907.6,226.8 904.6,229.2" fill="#e8eef0" /><polygon points="928.0,220.8 934.0,222.0 938.8,224.4 949.6,228.6 949.6,231.6 938.8,227.4 934.0,226.8 929.8,223.2" fill="#0a0a0a" /><polygon points="932.8,223.8 938.8,225.8 938.8,227.4 934.0,226.8" fill="#f2f2f2" /><polygon points="882.4,238.8 886.0,234.0 891.4,231.6 900.4,228.6 900.4,230.1 892.0,232.8 887.2,235.8 886.0,238.8" fill="#08080a" /><g fill="#000"><rect x="886.0" y="231.3" width="5.0" height="4.3"/></g><polygon points="950.1,283.2 954.3,282.0 955.5,294.0 954.3,306.0 956.7,318.0 954.3,318.0 951.9,306.0 947.2,303.6 946.6,295.2 949.6,292.8" fill="#c9d6de" /><g fill="#05050a"><rect x="893.2" y="259.7" width="2.4" height="1.9"/><rect x="879.4" y="274.7" width="3.6" height="1.7"/><rect x="908.8" y="276.5" width="3.6" height="1.7"/></g><g fill="#05050a"><rect x="879.4" y="274.8" width="3.6" height="1.4"/><rect x="908.8" y="277.0" width="3.4" height="1.4"/><rect x="898.6" y="290.6" width="4.3" height="1.7"/><rect x="925.0" y="324.2" width="3.1" height="1.7"/><rect x="934.6" y="333.0" width="2.9" height="1.7"/></g><polygon points="901.0,171.0 910.0,171.0 910.0,177.0 919.6,177.0 917.2,171.0 923.2,171.0 923.2,164.4 928.0,164.4 932.8,168.0 936.4,171.6 940.0,175.2 943.6,178.2 947.8,181.8 947.8,190.8 951.9,194.4 951.9,199.8 944.8,199.8 943.0,206.4 941.8,212.4 934.0,212.4 932.8,215.4 910.0,213.6 908.8,206.4 902.8,204.6 892.6,203.4 892.0,198.6 895.6,196.8 895.0,190.8 897.4,184.8 900.4,180.0" fill="#14140c" /><g fill="#020202"><rect x="901.0" y="171.0" width="9.0" height="7.2"/><rect x="923.2" y="164.4" width="5.0" height="7.2"/><rect x="895.0" y="190.2" width="4.8" height="5.4"/><rect x="946.0" y="191.4" width="6.0" height="8.4"/><rect x="928.0" y="212.4" width="4.8" height="6.0"/><rect x="929.8" y="218.4" width="5.4" height="3.0"/><rect x="934.0" y="171.6" width="6.0" height="7.2"/></g><g fill="#3a3d30"><rect x="917.2" y="171.0" width="6.0" height="4.8"/><rect x="924.4" y="172.8" width="7.2" height="7.2"/></g><g fill="#cfd2d2"><rect x="939.4" y="184.8" width="4.8" height="3.1"/></g><g fill="#e8e8e8"><rect x="940.6" y="180.9" width="5.4" height="1.7"/></g><polygon points="872.8,325.8 884.8,326.4 886.0,337.2 889.6,346.8 886.0,354.0 884.8,366.0 880.0,375.5 871.6,371.9 866.8,366.0 866.8,346.8 870.4,337.2" fill="#93634f" /><g fill="#b8794f"><rect x="866.8" y="325.8" width="4.6" height="3.8"/><rect x="866.2" y="364.2" width="4.3" height="3.6"/><rect x="866.8" y="369.0" width="4.1" height="3.6"/></g><polygon points="865.6,352.2 884.8,351.6 884.8,355.4 865.6,356.1" fill="#2a1c14" /><polygon points="873.4,361.2 877.0,361.2 878.2,374.3 873.4,374.6 871.3,369.6" fill="#030303" /><polygon points="878.8,366.0 886.0,364.8 886.0,376.7 878.8,379.1" fill="#4a3324" /><polygon points="956.1,336.6 966.3,337.2 966.9,352.8 963.3,354.6 956.1,354.0" fill="#91604c" /><g fill="#1a120c"><rect x="960.9" y="337.2" width="5.4" height="2.6"/></g><polygon points="891.4,342.3 922.0,338.6 955.5,335.4 956.1,354.0 963.3,354.0 963.9,377.9 961.5,385.1 959.3,400.0 958.6,429.1 962.2,443.7 962.2,461.2 958.6,475.8 957.1,490.3 952.0,502.0 950.5,508.6 938.9,508.6 938.2,472.9 937.4,448.1 936.0,448.1 936.3,487.4 937.4,523.9 921.4,526.5 915.6,516.6 911.9,502.0 908.3,481.6 905.4,461.2 899.5,436.4 893.7,400.0 883.6,385.1 884.2,377.9 886.0,366.0 888.4,354.0 886.0,346.8" fill="#10130a"/><g fill="#6a5a50"><rect x="956.1" y="354.6" width="6.0" height="4.8"/><rect x="956.1" y="364.8" width="6.0" height="3.6"/><rect x="956.1" y="373.1" width="6.0" height="3.6"/><rect x="956.1" y="376.7" width="5.4" height="3.0"/></g><g fill="#e8e8e0"><rect x="956.1" y="368.6" width="4.8" height="1.9"/></g><polygon points="883.6,339.6 888.4,340.8 890.2,345.6 886.0,346.8" fill="#e0e6e6" /><polygon points="884.2,354.6 887.2,354.0 889.6,362.4 886.0,363.0" fill="#d8dede" /><polygon points="955.5,337.2 957.9,337.2 957.3,351.6 955.3,351.6" fill="#e6e8e4" /><g fill="#c8d0b8"><rect x="886.0" y="386.9" width="3.6" height="6.6"/></g><polygon points="890.1,400.0 893.7,400.0 898.1,421.9 901.0,437.9 900.3,443.7 895.9,445.2 892.3,435.0 889.1,421.9 890.8,411.7" fill="#dfe8e2" /><polygon points="925.8,401.5 929.4,400.0 933.8,411.7 933.8,435.0 930.9,436.4 927.2,426.2 927.2,413.1" fill="#e4ecea" /><polygon points="932.3,440.8 936.0,443.7 938.2,449.5 936.0,450.3" fill="#e4ecea" /><polygon points="926.5,426.2 930.1,427.7 931.6,446.6 929.4,469.9 928.0,448.1" fill="#020202" /><g fill="#a8a898"><rect x="902.8" y="453.2" width="3.5" height="4.4"/><rect x="901.3" y="459.7" width="3.8" height="4.1"/><rect x="910.0" y="495.4" width="2.9" height="8.7"/><rect x="911.9" y="510.0" width="4.4" height="6.6"/><rect x="956.4" y="439.6" width="5.0" height="1.7"/><rect x="955.6" y="472.9" width="4.1" height="4.4"/></g><polygon points="938.9,508.6 950.5,507.8 954.2,512.2 954.2,524.6 950.5,526.5 941.1,525.3 938.6,520.9" fill="#8a4a34" /><polygon points="938.9,510.7 948.4,511.0 950.5,516.6 946.2,519.8 939.2,518.8" fill="#d9d2c8" /><polygon points="939.6,519.8 950.5,517.3 954.2,518.8 953.8,523.1 941.1,523.9" fill="#cf4f66" /><polygon points="946.9,499.1 952.0,498.4 952.7,507.8 946.9,508.6" fill="#5a2e28" /><polygon points="922.9,526.8 937.4,523.9 941.1,529.7 940.3,537.0 931.6,539.9 925.8,542.1 922.9,538.4" fill="#d6cfc6" /><polygon points="919.9,542.1 925.8,540.6 937.4,536.2 943.3,542.8 947.3,543.5 946.2,550.1 937.4,553.0 925.8,553.0 919.9,548.6" fill="#d3567a" /><polygon points="924.3,550.1 941.8,549.8 938.9,553.3 925.0,553.4" fill="#8c4a3a" /><polygon points="925.8,537.0 931.6,535.5 937.4,537.0 931.6,540.6 925.8,541.6" fill="#77685c" /><polygon points="917.3,527.5 922.1,527.1 925.8,531.1 923.6,538.4 918.5,536.2" fill="#030303" /><polygon points="910.5,540.6 914.8,541.1 919.9,543.5 919.7,549.7 916.3,549.4 911.2,545.0" fill="#030303" /><g fill="#e8e8e8"><rect x="910.5" y="539.9" width="4.1" height="1.7"/></g><g fill="#000"><rect x="886.1" y="523.1" width="4.1" height="3.9"/></g><g fill="#8f948c"><rect x="934.8" y="507.1" width="3.5" height="16.0"/></g></g><g stroke="#00ff00" stroke-width="1.3" fill="none"><line x1="982.5" y1="144.0" x2="843.6" y2="147.2"/><line x1="1001.6" y1="552.1" x2="882.0" y2="561.0"/><line x1="843.6" y1="147.2" x2="882.0" y2="561.0"/><line x1="982.5" y1="144.0" x2="1001.6" y2="552.1"/></g><g stroke="#b4bcbc" stroke-opacity="0.7" stroke-width="1.0" fill="none"><line x1="883.0" y1="386.9" x2="962.0" y2="382.8"/><line x1="901.0" y1="440.1" x2="960.0" y2="436.6"/><line x1="911.0" y1="509.4" x2="951.0" y2="506.7"/><line x1="926.7" y1="384.6" x2="940.5" y2="536.9"/></g><text x="848.9" y="126.4" font-family="Liberation Sans, sans-serif" font-size="20.4" fill="#ffff00">Follow_Target</text></svg></div><span class="t" id="t0" style="left:36.00px;top:11.93px;font-size:17.33px;letter-spacing:0.286px;">Interact</span><span class="t" id="t1" style="left:138.50px;top:11.93px;font-size:17.33px;letter-spacing:-0.650px;">Move Camera</span><span class="t" id="t2" style="left:283.50px;top:11.93px;font-size:17.33px;letter-spacing:-0.460px;">Select</span><span class="t" id="t3" style="left:373.20px;top:11.93px;font-size:17.33px;letter-spacing:-0.882px;">Focus Camera</span><span class="t" id="t4" style="left:519.50px;top:11.93px;font-size:17.33px;letter-spacing:-0.383px;">Measure</span><span class="t" id="t5" style="left:627.40px;top:11.93px;font-size:17.33px;letter-spacing:-0.460px;">2D Pose Estimate</span><span class="t" id="t6" style="left:802.50px;top:11.93px;font-size:17.33px;letter-spacing:-0.620px;">2D Nav Goal</span><span class="t" id="t7" style="left:937.30px;top:11.93px;font-size:17.33px;letter-spacing:-0.175px;">Publish Point</span><span class="t" id="t8" style="left:24.90px;top:44.07px;letter-spacing:0.171px;">Displays</span><span class="t" id="t9" style="left:26.40px;top:1064.57px;letter-spacing:0.333px;">Time</span><span class="t" id="t62" style="left:26.00px;top:1024.67px;letter-spacing:0.350px;">Add</span><span class="t" id="t63" style="left:101.30px;top:1024.67px;color:#a5a3a0;letter-spacing:0.662px;">Duplicate</span><span class="t" id="t64" style="left:215.10px;top:1024.67px;color:#a5a3a0;letter-spacing:0.120px;">Remove</span><span class="t" id="t65" style="left:314.50px;top:1024.67px;color:#a5a3a0;letter-spacing:0.060px;">Rename</span><span class="t" id="t66" style="left:10.40px;top:1099.37px;letter-spacing:-0.200px;">ROS Time:</span><span class="t" id="t67" style="left:115.80px;top:1099.37px;letter-spacing:0.242px;">1488887917.08</span><span class="t" id="t68" style="left:296.50px;top:1099.37px;letter-spacing:-0.409px;">ROS Elapsed:</span><span class="t" id="t69" style="left:428.40px;top:1099.37px;letter-spacing:0.275px;">30.11</span><span class="t" id="t70" style="left:610.80px;top:1099.37px;letter-spacing:0.167px;">Wall Time:</span><span class="t" id="t71" style="left:714.80px;top:1099.37px;letter-spacing:0.150px;">1488887917.12</span><span class="t" id="t72" style="left:897.00px;top:1099.37px;letter-spacing:-0.100px;">Wall Elapsed:</span><span class="t" id="t73" style="left:1027.40px;top:1099.37px;letter-spacing:0.275px;">30.05</span><span class="t" id="t74" style="left:1690.40px;top:1099.37px;letter-spacing:0.591px;">Experimental</span><span class="t" id="t75" style="left:10.40px;top:1139.17px;letter-spacing:0.175px;">Reset</span><span class="t" id="t76" style="left:77.10px;top:1139.17px;letter-spacing:0.138px;">RViz is ready.</span><span class="t" id="t77" style="left:1773.30px;top:1136.07px;letter-spacing:0.460px;">29 fps</span></body></html>
